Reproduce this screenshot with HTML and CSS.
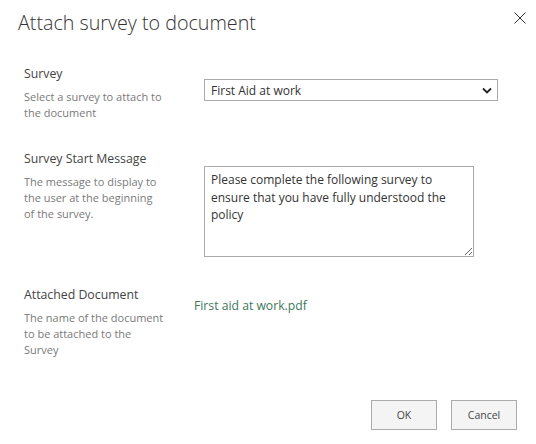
FILE: index.html
```html
<!DOCTYPE html>
<html lang="en">
<head>
  <meta charset="UTF-8" />
  <title>Attach survey to document</title>
  <link rel="stylesheet" href="styles.css">
</head>
<body>
  <div class="dialog">
    <h1 class="title">Attach survey to document</h1>
    <button class="close" aria-label="Close">
      <svg width="12" height="12" viewBox="0 0 12 12">
        <path d="M0.5 0.5 L11.5 11.5 M11.5 0.5 L0.5 11.5" stroke="#333" stroke-width="1" fill="none" />
      </svg>
    </button>

    <div class="field">
      <div class="info">
        <div class="label">Survey</div>
        <div class="desc">Select a survey to attach to the document</div>
      </div>
      <div class="control">
        <div class="select-wrap">
          <select class="select">
            <option>First Aid at work</option>
          </select>
          <svg class="chevron" width="10" height="7" viewBox="0 0 10 7">
            <path d="M1 1.5 L5 5.5 L9 1.5" stroke="#222" stroke-width="1.8" fill="none" />
          </svg>
        </div>
      </div>
    </div>

    <div class="field">
      <div class="info">
        <div class="label">Survey Start Message</div>
        <div class="desc">The message to display to the user at the beginning of the survey.</div>
      </div>
      <div class="control">
        <textarea class="message">Please complete the following survey to ensure that you have fully understood the policy</textarea>
      </div>
    </div>

    <div class="field">
      <div class="info">
        <div class="label">Attached Document</div>
        <div class="desc">The name of the document to be attached to the Survey</div>
      </div>
      <div class="control">
        <a class="doc-link" href="#">First aid at work.pdf</a>
      </div>
    </div>

    <div class="buttons">
      <button class="btn">OK</button>
      <button class="btn">Cancel</button>
    </div>
  </div>
</body>
</html>
```

FILE: styles.css
```css
body {
  margin: 0;
  background: #fff;
  font-family: 'Open Sans', 'Liberation Sans', sans-serif;
  color: #333;
}
.dialog {
  position: relative;
  padding: 9px 19px 0 18px;
}
.title {
  margin: 0;
  font-size: 19.7px;
  font-weight: 300;
  line-height: 28px;
  color: #333;
}
.close {
  position: absolute;
  top: 12px;
  right: 10px;
  width: 12px;
  height: 12px;
  padding: 0;
  border: 0;
  background: none;
  line-height: 0;
}
.field {
  display: grid;
  grid-template-columns: 180px 294px;
  margin-left: 6px;
  margin-top: 29px;
}
.field:first-of-type {
  margin-top: 28px;
}
.label {
  font-size: 12.3px;
  line-height: 18px;
  color: #444;
}
.desc {
  width: 140px;
  margin-top: 6px;
  font-size: 11px;
  line-height: 16px;
  color: #7a7a7a;
}
.select-wrap {
  position: relative;
  margin-top: 14px;
}
.select {
  appearance: none;
  display: block;
  width: 294px;
  height: 22px;
  margin: 0;
  padding: 0 24px 0 6px;
  border: 1px solid #ababab;
  border-radius: 0;
  background: #fff;
  font-family: inherit;
  font-size: 12px;
  color: #333;
}
.chevron {
  position: absolute;
  top: 8px;
  right: 6px;
}
.message {
  display: block;
  box-sizing: border-box;
  width: 270px;
  height: 91px;
  margin: 16px 0 0;
  padding: 4px 6px;
  border: 1px solid #ababab;
  border-radius: 0;
  font-family: inherit;
  font-size: 12px;
  line-height: 17.5px;
  color: #333;
  resize: vertical;
}
.doc-link {
  display: inline-block;
  margin: 11px 0 0 -10px;
  font-size: 12.2px;
  line-height: 18px;
  color: #40785a;
  text-decoration: none;
}
.buttons {
  display: flex;
  justify-content: flex-end;
  gap: 14px;
  margin-top: 42px;
}
.btn {
  width: 66px;
  height: 30px;
  padding: 0;
  border: 1px solid #ababab;
  border-radius: 0;
  background: #f4f4f4;
  font-family: inherit;
  font-size: 10.5px;
  color: #444;
}
```
